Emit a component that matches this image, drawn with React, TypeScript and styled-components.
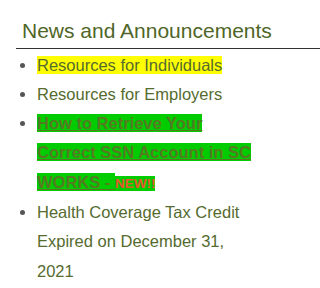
import styled, { createGlobalStyle } from "styled-components";

const GlobalStyle = createGlobalStyle`
  html, body {
    margin: 0;
    padding: 0;
    background: #ffffff;
  }
  body {
    font-family: "Liberation Sans", Arial, sans-serif;
  }
`;

const Section = styled.section`
  padding: 18px 0 0 16px;
`;

const Heading = styled.h2`
  margin: 0;
  padding: 0 0 4px 6px;
  font-size: 21px;
  line-height: 26px;
  font-weight: 400;
  color: #4f6628;
  border-bottom: 1px solid #333333;
`;

const List = styled.ul`
  margin: 0;
  padding: 1.5px 0 0 21px;
  max-width: 219px;
  list-style: disc;
`;

const Item = styled.li`
  color: #555555;
  font-size: 16.5px;
  line-height: 29.3px;
`;

const Link = styled.span<{ $mark?: string }>`
  color: #556b2f;
  background: ${(p) => p.$mark ?? "transparent"};
`;

const Featured = styled.span`
  color: #557a22;
  background: #00cc00;
  font-weight: 700;
  text-decoration: underline;
`;

const NewTag = styled.span`
  color: #e4572e;
  background: #00cc00;
  font-size: 13.5px;
  font-weight: 700;
`;

export default function App() {
  return (
    <>
      <GlobalStyle />
      <Section>
        <Heading>News and Announcements</Heading>
        <List>
          <Item>
            <Link $mark="#ffff00">Resources for Individuals</Link>
          </Item>
          <Item>
            <Link>Resources for Employers</Link>
          </Item>
          <Item>
            <Featured>How to Retrieve Your Correct SSN Account in SC WORKS - </Featured>
            <NewTag>NEW!!</NewTag>
          </Item>
          <Item>
            <Link>Health Coverage Tax Credit Expired on December 31, 2021</Link>
          </Item>
        </List>
      </Section>
    </>
  );
}
